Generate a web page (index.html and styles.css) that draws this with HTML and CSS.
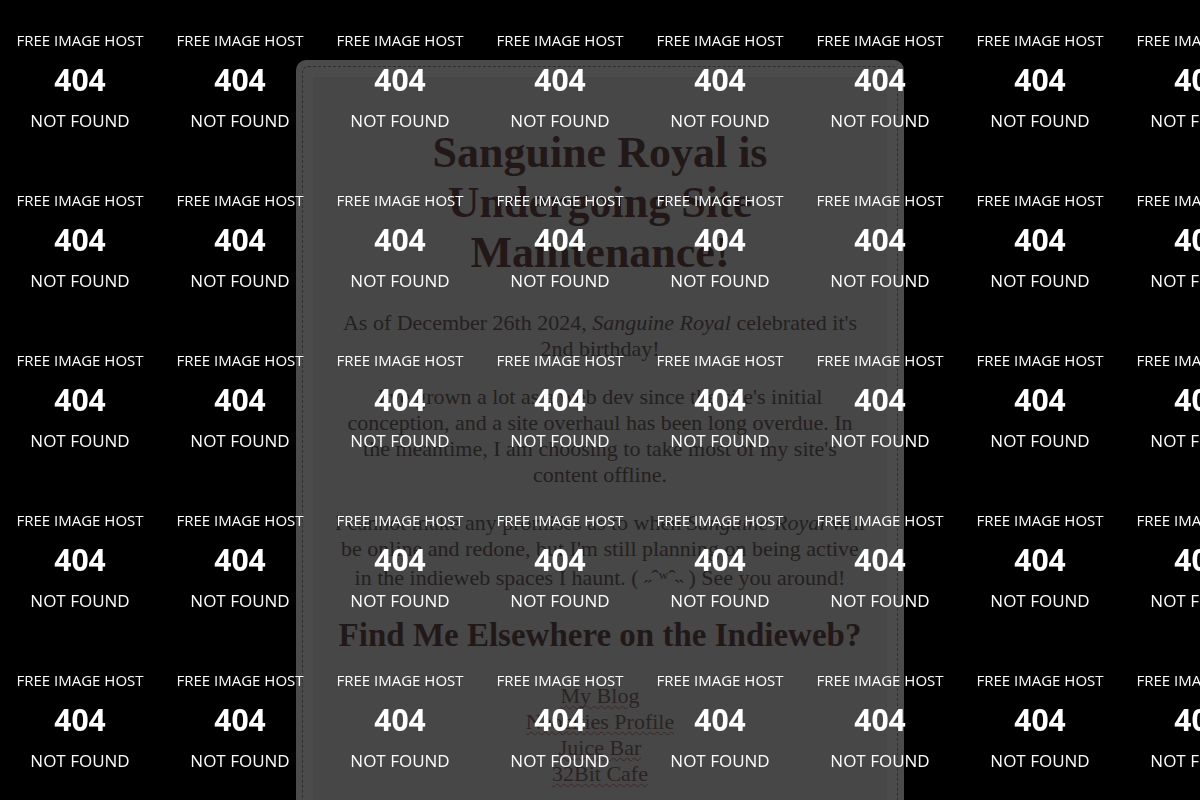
FILE: index.html
```html
<!DOCTYPE html>
<html>
<head>
	<title>Sanguine Royal</title>
	<link rel="stylesheet" href="styles.css">
</head>
<body>
	<div id="frame">
		<div id="frame-inner">
			<div id="content">
				<h1>Sanguine Royal is Undergoing Site Maintenance!</h1>
				<p>As of December 26th 2024, <i>Sanguine Royal</i> celebrated it's 2nd birthday!</p>
				<p>I've grown a lot as a web dev since the site's initial conception, and a site overhaul has been long overdue. In the meantime, I am choosing to take most of my site's content offline.</p>
				<p>I cannot make any promises as to when <i>Sanguine Royal</i> will be online and redone, but I'm still planning on being active in the indieweb spaces I haunt. <span class="kao">( ˶ˆʷˆ˵ )</span> See you around!</p>
				<h2>Find Me Elsewhere on the Indieweb?</h2>
				<ul class="links">
					<li><a href="#">My Blog</a></li>
					<li><a href="#">Neocities Profile</a></li>
					<li><a href="#">Juice Bar</a></li>
					<li><a href="#">32Bit Cafe</a></li>
				</ul>
			</div>
		</div>
	</div>

	<div id="tiles"></div>

	<script>
		var tiles = document.getElementById("tiles");
		for(let i = 0; i < 40; i++){
			let t = document.createElement("div");
			t.className = "tile";
			t.innerHTML = '<div class="host">FREE IMAGE HOST</div><div class="code">404</div><div class="nf">NOT FOUND</div>';
			tiles.appendChild(t);
		}
	</script>
</body>
</html>
```

FILE: styles.css
```css
*{
	box-sizing: border-box;
}

html, body{
	background-color: #000;
	margin: 0px;
	font-family: "Liberation Serif", "Times New Roman", serif;
}

#frame{
	width: 608px;
	margin: 60px auto 0 auto;
	background-color: #4b4b4b;
	border-radius: 10px 10px 0 0;
	padding: 6px 6px 0 6px;
}

#frame-inner{
	border: 1px dashed #2e2e2e;
	border-bottom: none;
	padding: 10px 10px 0 10px;
	border-radius: 6px 6px 0 0;
}

#content{
	background-color: #474747;
	padding: 24px 20px 40px 20px;
	text-align: center;
	color: #242020;
	font-size: 22px;
}

h1{
	font-size: 44px;
	line-height: 50px;
	margin: 27px 0 32px 0;
	color: #221818;
}

p{
	line-height: 26px;
	margin: 0 0 22px 0;
}

/* the kaomoji glyphs sit a little taller than the text */
.kao{
	display: inline-block;
	line-height: 26px;
	padding-top: 3px;
	vertical-align: baseline;
}

h2{
	font-size: 33px;
	line-height: 38px;
	margin: 25px 0 29px 0;
	color: #221818;
}

.links{
	list-style: none;
	margin: 0;
	padding: 0;
}

.links li{
	line-height: 26px;
}

.links a{
	color: #2b2323;
	text-decoration: underline wavy #3a2626;
	text-decoration-thickness: 1px;
	text-underline-offset: 2px;
}

/* placeholder tiles drawn over the whole page */
#tiles{
	position: fixed;
	top: 0;
	left: 0;
	width: 1280px;
	height: 800px;
	display: grid;
	grid-template-columns: repeat(8, 160px);
	grid-auto-rows: 160px;
	pointer-events: none;
	overflow: hidden;
}

.tile{
	padding-top: 20px;
	text-align: center;
	color: #fff;
	font-family: "Open Sans", "DejaVu Sans", sans-serif;
}

.tile div{
	height: 40px;
	line-height: 40px;
}

.host{
	font-size: 15px;
}

.code{
	font-size: 30px;
	font-weight: bold;
}

.nf{
	font-size: 17px;
	padding-top: 1px;
}
```
